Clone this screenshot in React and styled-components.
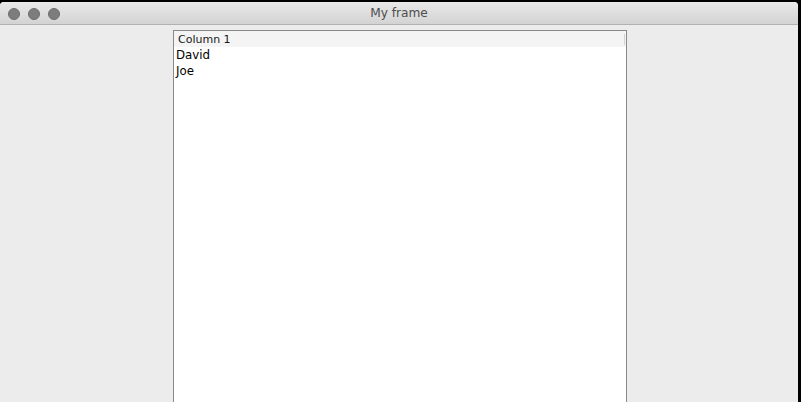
import React from "react";
import styled, { createGlobalStyle } from "styled-components";

const GlobalStyle = createGlobalStyle`
  html, body {
    margin: 0;
    padding: 0;
    background: #000;
  }
  body {
    font-family: "DejaVu Sans", "Liberation Sans", sans-serif;
  }
`;

const Window = styled.div`
  width: 798px;
  height: 402px;
  display: flex;
  flex-direction: column;
  background: #ececec;
  border-radius: 4px 4px 0 0;
  margin-top: 2px;
  overflow: hidden;
`;

const TitleBar = styled.div`
  height: 22px;
  flex: none;
  position: relative;
  display: flex;
  align-items: center;
  justify-content: center;
  background: linear-gradient(#e9e9e9, #d3d3d3);
  border-bottom: 1px solid #b1b1b1;
`;

const Lights = styled.div`
  position: absolute;
  left: 8px;
  top: 6px;
  display: flex;
  gap: 8px;
`;

const Light = styled.span`
  width: 12px;
  height: 12px;
  border-radius: 50%;
  box-sizing: border-box;
  background: #7d7d7d;
  border: 1px solid #6e6e6e;
`;

const Title = styled.span`
  font-size: 12.2px;
  color: #4d4d4d;
`;

const Content = styled.div`
  flex: 1;
  display: flex;
  justify-content: flex-start;
  padding: 5px 0 0 173px;
  min-height: 0;
`;

const Table = styled.div`
  width: 452px;
  border: 1px solid #8a8a8a;
  border-bottom: none;
  background: #fff;
  display: flex;
  flex-direction: column;
`;

const Header = styled.div`
  height: 16px;
  display: flex;
  align-items: center;
  justify-content: space-between;
  background: #f4f4f4;
  padding-left: 4px;
  font-size: 11px;
  color: #1a1a1a;
`;

const Separator = styled.span`
  width: 1px;
  height: 11px;
  margin-right: 1px;
  background: #d3d3d3;
`;

const Row = styled.div`
  height: 16px;
  line-height: 17px;
  padding-left: 2px;
  font-size: 11.8px;
  color: #000;
`;

export default function App() {
  const names = ["David", "Joe"];
  return (
    <>
      <GlobalStyle />
      <Window>
        <TitleBar>
          <Lights>
            <Light />
            <Light />
            <Light />
          </Lights>
          <Title>My frame</Title>
        </TitleBar>
        <Content>
          <Table>
            <Header>
              Column 1
              <Separator />
            </Header>
            {names.map((n) => (
              <Row key={n}>{n}</Row>
            ))}
          </Table>
        </Content>
      </Window>
    </>
  );
}
